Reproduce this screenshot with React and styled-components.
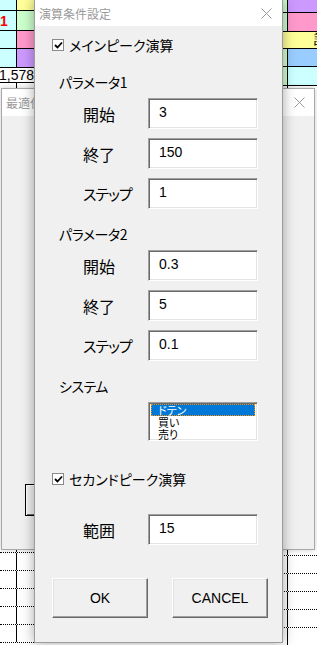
import React from 'react'
import styled, { createGlobalStyle } from 'styled-components'

const GlobalStyle = createGlobalStyle`
  html, body {
    margin: 0;
    padding: 0;
    background: #ffffff;
    overflow: hidden;
  }
  * { box-sizing: border-box; }
`

const jp = `"Noto Sans CJK JP", "Noto Sans", sans-serif`
const latin = `"Liberation Sans", Arial, sans-serif`

const Screen = styled.div`
  position: relative;
  width: 317px;
  height: 645px;
  overflow: hidden;
  background: #ffffff;
  font-family: ${latin};
`

/* ---------- spreadsheet behind everything ---------- */

const Sheet = styled.div`
  display: flex;
  justify-content: space-between;
  height: 100%;
`

const SheetStrip = styled.div`
  width: ${p => p.w}px;
  display: flex;
  flex-direction: column;
`

const SheetRow = styled.div`
  display: flex;
  height: ${p => p.h}px;
  flex: none;
  border-bottom: 1px ${p => (p.dotted ? 'dotted' : 'solid')} #000;
`

const Cell = styled.div`
  width: ${p => (p.w ? `${p.w}px` : 'auto')};
  flex: ${p => (p.w ? 'none' : '1')};
  background: ${p => p.bg || '#ffffff'};
  border-right: ${p => (p.line ? '1px solid #000' : 'none')};
  overflow: hidden;
  display: flex;
  align-items: center;
  justify-content: ${p => p.align || 'flex-start'};
  font-family: ${latin};
  font-size: 14px;
  color: ${p => p.color || '#000'};
  font-weight: ${p => (p.bold ? 700 : 400)};
  white-space: nowrap;
`

const CellText = styled.span`
  margin-right: ${p => p.mr || 0}px;
`

/* ---------- windows ---------- */

const BackWindow = styled.div`
  position: absolute;
  left: 1px;
  top: 88px;
  width: 314px;
  height: 462px;
  background: #f0f0f0;
  border: 1px solid #a8a8a8;
  box-shadow: 0 0 6px rgba(0, 0, 0, 0.2);
  display: flex;
  flex-direction: column;
`

const TitleBar = styled.div`
  height: ${p => p.h}px;
  flex: none;
  background: #ffffff;
  display: flex;
  align-items: center;
  justify-content: space-between;
  padding: 0 ${p => p.pr}px 0 ${p => p.pl}px;
`

const TitleText = styled.span`
  font-family: ${jp};
  font-size: 12px;
  color: #9a9a9a;
  white-space: nowrap;
`

const BackBody = styled.div`
  flex: 1;
  padding: 368px 0 0 23px;
`

const FocusButton = styled.div`
  width: 110px;
  height: 32px;
  border: 1px solid #000;
  background: #f0f0f0;
  box-shadow: inset 1px 1px 0 #fff, inset -1px -1px 0 #696969;
`

const Dialog = styled.div`
  position: absolute;
  left: 34px;
  top: -1px;
  width: 249px;
  height: 644px;
  background: #f0f0f0;
  border: 1px solid #9c9c9c;
  box-shadow: 0 0 12px rgba(0, 0, 0, 0.35);
  display: flex;
  flex-direction: column;
`

const DialogBody = styled.div`
  flex: 1;
  display: flex;
  flex-direction: column;
  padding: 9px 0 0 17px;
`

const CheckRow = styled.label`
  display: flex;
  align-items: center;
  height: 20px;
  margin-top: ${p => p.mt || 0}px;
  gap: 5px;
  font-family: ${jp};
  font-feature-settings: "palt";
  font-size: 14px;
  color: #000;
`

const CheckBox = styled.span`
  width: 12px;
  height: 12px;
  flex: none;
  background: #fff;
  border: 1px solid #8a8a8a;
  display: flex;
  align-items: center;
  justify-content: center;
`

const SectionLabel = styled.div`
  height: 20px;
  margin: ${p => p.mt}px 0 6px 7px;
  display: flex;
  align-items: center;
  font-family: ${jp};
  font-feature-settings: "palt";
  font-size: 14px;
  letter-spacing: -0.5px;
  color: #000;
`

const Fields = styled.div`
  display: flex;
  flex-direction: column;
  gap: 9px;
  margin-top: ${p => p.mt || 0}px;
`

const FieldRow = styled.div`
  display: grid;
  grid-template-columns: 65px 110px;
  align-items: center;
  padding-left: 31px;
`

const FieldLabel = styled.span`
  font-family: ${jp};
  font-feature-settings: "palt";
  font-size: ${p => (p.kana ? 15 : 16)}px;
  letter-spacing: ${p => (p.kana ? -1 : 0)}px;
  color: #000;
  white-space: nowrap;
`

const TextBox = styled.div`
  height: 31px;
  background: #fff;
  border-top: 1px solid #a0a0a0;
  border-left: 1px solid #a0a0a0;
  border-bottom: 1px solid #fff;
  border-right: 1px solid #fff;
  box-shadow: inset 1px 1px 0 #696969, inset -1px -1px 0 #e3e3e3;
  padding: 5px 0 0 10px;
  font-family: ${latin};
  font-size: 14px;
  line-height: 17px;
  color: #000;
`

const ListBox = styled.div`
  height: 39px;
  background: #fff;
  border-top: 1px solid #a0a0a0;
  border-left: 1px solid #a0a0a0;
  border-bottom: 1px solid #fff;
  border-right: 1px solid #fff;
  box-shadow: inset 1px 1px 0 #696969, inset -1px -1px 0 #e3e3e3;
  padding: 1px 2px 0 2px;
  display: flex;
  flex-direction: column;
`

const ListItem = styled.div`
  height: 12px;
  flex: none;
  line-height: ${p => (p.selected ? 10 : 12)}px;
  padding-left: ${p => (p.selected ? 6 : 7)}px;
  font-family: ${jp};
  font-feature-settings: "palt";
  font-size: 11px;
  color: ${p => (p.selected ? '#fff' : '#000')};
  background: ${p => (p.selected ? '#0078d7' : 'transparent')};
  border: ${p => (p.selected ? '1px dotted #ff8a00' : 'none')};
  white-space: nowrap;
`

const ButtonRow = styled.div`
  display: flex;
  gap: 24px;
  margin-top: 33px;
`

const Button = styled.div`
  width: 96px;
  height: 40px;
  background: #f0f0f0;
  border-top: 1px solid #fff;
  border-left: 1px solid #fff;
  border-bottom: 1px solid #696969;
  border-right: 1px solid #696969;
  box-shadow: inset -1px -1px 0 #a0a0a0, inset 1px 1px 0 #e3e3e3;
  display: flex;
  align-items: center;
  justify-content: center;
  font-family: ${latin};
  font-size: 14px;
  color: #000;
`

const CloseIcon = ({ size = 11, color = '#9a9a9a' }) => (
  <svg width={size} height={size} viewBox="0 0 11 11">
    <path d="M0.5 0.5 L10.5 10.5 M10.5 0.5 L0.5 10.5" stroke={color} strokeWidth="1" fill="none" />
  </svg>
)

const Check = () => (
  <svg width="9" height="9" viewBox="0 0 9 9">
    <path d="M1 4 L3.5 6.5 L8 1.5" stroke="#000" strokeWidth="1.8" fill="none" />
  </svg>
)

const leftRows = [
  { h: 11, cells: [{ w: 17, bg: '#ccffff', line: true }, { bg: '#ffff99' }] },
  { h: 20, cells: [{ w: 17, bg: '#ccffff', line: true, text: '1', color: '#ff0000', bold: true }, { bg: '#ccffcc' }] },
  { h: 18, cells: [{ w: 17, bg: '#ccffff', line: true }, { bg: '#ff99cc' }] },
  { h: 19, cells: [{ w: 17, bg: '#ccffff', line: true }, { bg: '#cc99ff' }] },
  { h: 15, cells: [{ text: '1,578', align: 'flex-end' }] },
]

const rightRows = [
  { h: 13, cells: [{ w: 6, bg: '#ccffcc', line: true }, { bg: '#cc99ff' }] },
  { h: 19, cells: [{ w: 6, bg: '#ccffcc', line: true }, { bg: '#ff99cc' }] },
  { h: 17, cells: [{ bg: '#ffff99', text: '計', align: 'flex-end', mr: -11 }] },
  { h: 18, cells: [{ w: 6, bg: '#ccffcc', line: true }, { bg: '#99ccff' }] },
  { h: 19, cells: [{ w: 6, bg: '#ccffcc', line: true }, { bg: '#ccffff' }] },
]

const Strip = ({ w, rows, split }) => (
  <SheetStrip w={w}>
    {rows.map((r, i) => (
      <SheetRow key={i} h={r.h}>
        {r.cells.map(({ text, mr, ...c }, j) => (
          <Cell key={j} {...c}>
            {text && <CellText mr={mr}>{text}</CellText>}
          </Cell>
        ))}
      </SheetRow>
    ))}
    <SheetRow h={470} dotted>
      <Cell w={split} line />
      <Cell />
    </SheetRow>
    {[0, 1, 2, 3, 4].map(i => (
      <SheetRow key={`d${i}`} h={18} dotted>
        <Cell w={split} line />
        <Cell />
      </SheetRow>
    ))}
  </SheetStrip>
)

const Field = ({ label, value, kana }) => (
  <FieldRow>
    <FieldLabel kana={kana}>{label}</FieldLabel>
    <TextBox>{value}</TextBox>
  </FieldRow>
)

export default function App() {
  return (
    <Screen>
      <GlobalStyle />
      <Sheet>
        <Strip w={34} rows={leftRows} split={17} />
        <Strip w={35} rows={rightRows} split={6} />
      </Sheet>

      <BackWindow>
        <TitleBar h={27} pl={4} pr={9}>
          <TitleText>最適化条件設定</TitleText>
          <CloseIcon />
        </TitleBar>
        <BackBody>
          <FocusButton />
        </BackBody>
      </BackWindow>

      <Dialog>
        <TitleBar h={26} pl={4} pr={10}>
          <TitleText>演算条件設定</TitleText>
          <CloseIcon />
        </TitleBar>
        <DialogBody>
          <CheckRow>
            <CheckBox><Check /></CheckBox>
            メインピーク演算
          </CheckRow>

          <SectionLabel mt={17}>パラメータ1</SectionLabel>
          <Fields>
            <Field label="開始" value="3" />
            <Field label="終了" value="150" />
            <Field label="ステップ" value="1" kana />
          </Fields>

          <SectionLabel mt={15}>パラメータ2</SectionLabel>
          <Fields>
            <Field label="開始" value="0.3" />
            <Field label="終了" value="5" />
            <Field label="ステップ" value="0.1" kana />
          </Fields>

          <SectionLabel mt={15}>システム</SectionLabel>
          <FieldRow>
            <span />
            <ListBox>
              <ListItem selected>ドテン</ListItem>
              <ListItem>買い</ListItem>
              <ListItem>売り</ListItem>
            </ListBox>
          </FieldRow>

          <CheckRow mt={28}>
            <CheckBox><Check /></CheckBox>
            セカンドピーク演算
          </CheckRow>

          <Fields mt={25}>
            <Field label="範囲" value="15" />
          </Fields>

          <ButtonRow>
            <Button>OK</Button>
            <Button>CANCEL</Button>
          </ButtonRow>
        </DialogBody>
      </Dialog>
    </Screen>
  )
}
